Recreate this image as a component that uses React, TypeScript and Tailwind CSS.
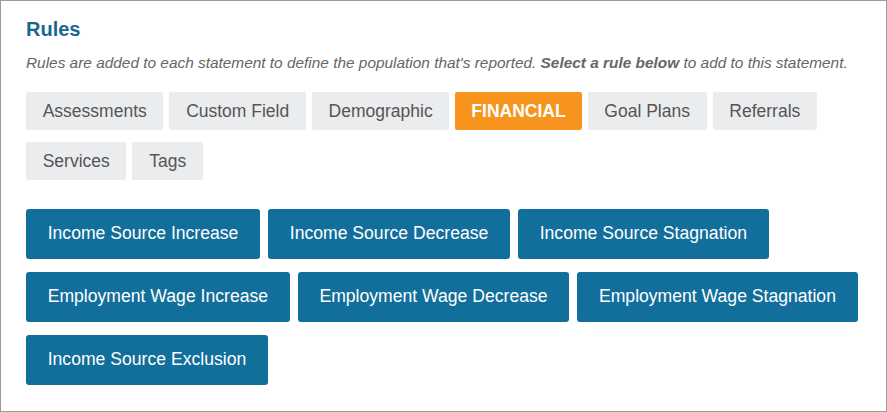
const categories = [
  'Assessments',
  'Custom Field',
  'Demographic',
  'Financial',
  'Goal Plans',
  'Referrals',
  'Services',
  'Tags',
];

// financial rules, grouped the way they wrap on the page
const financialRules = [
  ['Income Source Increase', 'Income Source Decrease', 'Income Source Stagnation'],
  ['Employment Wage Increase', 'Employment Wage Decrease', 'Employment Wage Stagnation'],
  ['Income Source Exclusion'],
];

export default function App() {
  const active = 'Financial';

  return (
    <div className="w-[887px] h-[412px] border border-[#9a9a9a] bg-white px-[25px] pt-[16px] font-['Liberation_Sans',Arial,sans-serif]">
      <h2 className="text-[20px] leading-[24px] font-bold text-[#17678f]">Rules</h2>

      <p className="mt-[12px] text-[15.4px] leading-[20px] italic text-[#666]">
        Rules are added to each statement to define the population that's reported.{' '}
        <span className="font-bold">Select a rule below</span> to add to this statement.
      </p>

      {/* category tabs */}
      <div className="mt-[19px] flex flex-wrap gap-x-[6px] gap-y-[12px] w-[810px]">
        {categories.map((c) =>
          c === active ? (
            <button
              key={c}
              className="h-[38px] px-[16px] rounded-[2px] bg-[#f7941d] text-white text-[17.5px] font-bold uppercase"
            >
              {c}
            </button>
          ) : (
            <button
              key={c}
              className="h-[38px] px-[16.7px] rounded-[2px] bg-[#ebecee] text-[#555] text-[17.5px]"
            >
              {c}
            </button>
          )
        )}
      </div>

      {/* rule buttons */}
      <div className="mt-[29px] flex flex-col gap-[13px]">
        {financialRules.map((row, i) => (
          <div key={i} className="flex gap-[8px]">
            {row.map((r) => (
              <button
                key={r}
                className="h-[50px] px-[21.7px] pb-[1px] rounded-[3px] bg-[#126e9b] text-white text-[17.6px]"
              >
                {r}
              </button>
            ))}
          </div>
        ))}
      </div>
    </div>
  );
}
